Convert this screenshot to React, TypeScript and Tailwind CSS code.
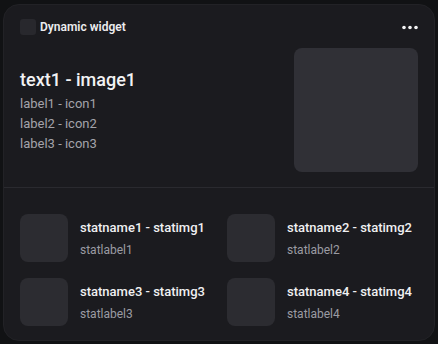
const stats = [
    { name: 'statname1', img: 'statimg1', label: 'statlabel1' },
    { name: 'statname2', img: 'statimg2', label: 'statlabel2' },
    { name: 'statname3', img: 'statimg3', label: 'statlabel3' },
    { name: 'statname4', img: 'statimg4', label: 'statlabel4' },
];

const labels = [
    { label: 'label1', icon: 'icon1' },
    { label: 'label2', icon: 'icon2' },
    { label: 'label3', icon: 'icon3' },
];

const App = () => {
    return (
        <div
            className="w-[438px] h-[344px] bg-[#111214] pl-[3px] pt-[4px]"
            style={{ fontFamily: 'Roboto, "Liberation Sans", sans-serif' }}
        >
            <div className="w-[432px] h-[337px] bg-[#1b1b1f] rounded-[16px] border border-[#222226] flex flex-col overflow-hidden">
                {/* Top section */}
                <div className="px-[16px] pt-[14px] pb-[15px] border-b border-[#2a2a2f]">
                    <div className="flex items-center justify-between h-[16px]">
                        <div className="flex items-center gap-[4px]">
                            <div className="w-[16px] h-[16px] rounded-[3px] bg-[#28282d]" />
                            <span className="text-[12px] font-semibold text-[#ececee]">Dynamic widget</span>
                        </div>
                        <svg width="17" height="5" viewBox="0 0 17 5" className="mr-[-1px]">
                            <circle cx="2" cy="2.5" r="1.8" fill="#f2f2f3" />
                            <circle cx="8" cy="2.5" r="1.8" fill="#f2f2f3" />
                            <circle cx="14" cy="2.5" r="1.8" fill="#f2f2f3" />
                        </svg>
                    </div>
                    <div className="flex items-center justify-between mt-[13px]">
                        <div className="flex flex-col">
                            <div className="text-[18px] leading-[28px] font-medium text-[#f2f2f3] whitespace-nowrap">text1 - image1</div>
                            {labels.map((l) => (
                                <div key={l.label} className="text-[13px] leading-[20px] text-[#a3a3aa] whitespace-nowrap">
                                    {l.label} - {l.icon}
                                </div>
                            ))}
                        </div>
                        <div className="w-[124px] h-[124px] rounded-[8px] bg-[#303036]" />
                    </div>
                </div>

                {/* Stats */}
                <div className="grid grid-cols-2 gap-x-[16px] gap-y-[16px] px-[16px] pt-[26px]">
                    {stats.map((s) => (
                        <div key={s.name} className="flex items-center gap-[12px]">
                            <div className="w-[48px] h-[48px] rounded-[8px] bg-[#2c2c31] shrink-0" />
                            <div className="flex flex-col">
                                <div className="text-[13px] leading-[18px] font-medium text-[#f0f0f2] whitespace-nowrap">
                                    {s.name} - {s.img}
                                </div>
                                <div className="text-[12px] leading-[16px] mt-[5px] text-[#9b9ba3]">{s.label}</div>
                            </div>
                        </div>
                    ))}
                </div>
            </div>
        </div>
    );
};

export default App;
